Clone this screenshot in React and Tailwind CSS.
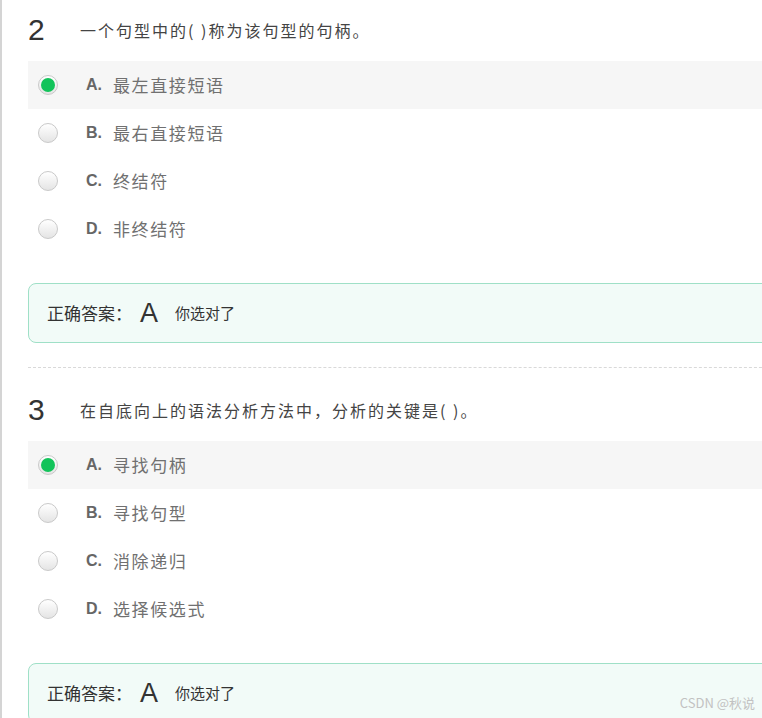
import React from 'react';

const questions = [
  {
    no: 2,
    title: '一个句型中的( )称为该句型的句柄。',
    options: [
      { key: 'A', text: '最左直接短语' },
      { key: 'B', text: '最右直接短语' },
      { key: 'C', text: '终结符' },
      { key: 'D', text: '非终结符' },
    ],
    picked: 'A',
    answer: 'A',
  },
  {
    no: 3,
    title: '在自底向上的语法分析方法中，分析的关键是( )。',
    options: [
      { key: 'A', text: '寻找句柄' },
      { key: 'B', text: '寻找句型' },
      { key: 'C', text: '消除递归' },
      { key: 'D', text: '选择候选式' },
    ],
    picked: 'A',
    answer: 'A',
  },
];

const cjk = "font-['Noto_Sans_CJK_SC',sans-serif]";

const Radio = ({ checked }) => (
  <span className="w-[20px] h-[20px] rounded-full border border-[#c9c9c9] bg-gradient-to-b from-white to-[#e4e4e4] flex items-center justify-center shrink-0">
    {checked && <span className="w-[14px] h-[14px] rounded-full bg-[#12c35a]" />}
  </span>
);

const Question = ({ q, first }) => (
  <div className={first ? '' : 'pt-[12px]'}>
    <div className="h-[61px] flex items-center pb-[2px]">
      <span className="w-[52px] text-[30px] leading-none text-[#333] font-['Liberation_Sans',sans-serif]">{q.no}</span>
      <span className={`text-[16px] tracking-[2px] text-[#444] ${cjk}`}>{q.title}</span>
    </div>
    {q.options.map((o) => (
      <div
        key={o.key}
        className={`h-[48px] flex items-center pl-[10px] ${q.picked === o.key ? 'bg-[#f6f6f6]' : ''}`}
      >
        <Radio checked={q.picked === o.key} />
        <span className="ml-[28px] w-[27px] text-[16px] font-bold text-[#666] font-['Liberation_Sans',sans-serif]">
          {o.key}.
        </span>
        <span className={`text-[17px] tracking-[1.6px] text-[#707070] ${cjk}`}>{o.text}</span>
      </div>
    ))}
    <div className="mt-[30px] h-[60px] rounded-[8px] border border-[#9fe0c7] bg-[#f2fbf8] px-[18px] flex items-center">
      <span className={`text-[17px] text-[#333] ${cjk}`}>正确答案：</span>
      <span className="ml-[8px] text-[27px] text-[#333] leading-none font-['Liberation_Sans',sans-serif]">{q.answer}</span>
      <span className={`ml-[17px] text-[15px] text-[#333] ${cjk}`}>你选对了</span>
    </div>
  </div>
);

export default function App() {
  return (
    <div className="relative w-[762px] h-[718px] overflow-hidden bg-white border-l-2 border-[#d4d4d4]">
      <div className="w-[800px] pl-[26px]">
        {questions.map((q, i) => (
          <React.Fragment key={q.no}>
            <Question q={q} first={i === 0} />
            {i < questions.length - 1 && (
              <div className="mt-[24px] border-t border-dashed border-[#d9d9d9]" />
            )}
          </React.Fragment>
        ))}
      </div>
      <span className={`absolute right-[7px] bottom-[6px] text-[13px] text-[#c2c2c2] ${cjk}`}>
        CSDN @秋说
      </span>
    </div>
  );
}
